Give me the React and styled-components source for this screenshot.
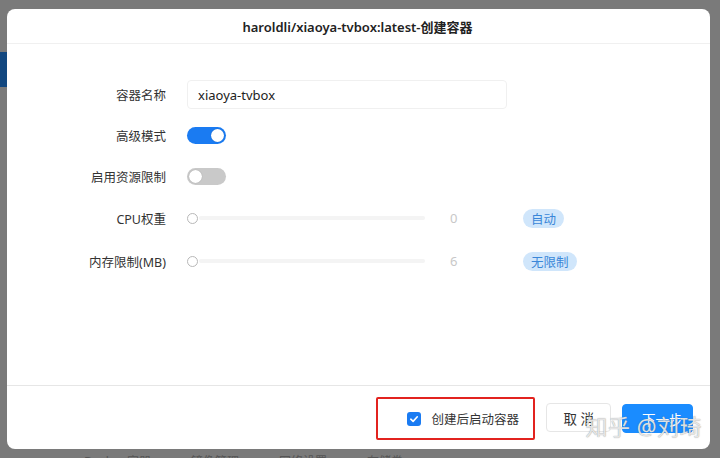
import React, { useState } from "react";
import styled, { createGlobalStyle } from "styled-components";

const GlobalStyle = createGlobalStyle`
    html, body {
        margin: 0;
        padding: 0;
        background: #7a7a7a;
    }
    body {
        font-family: "Noto Sans", "Noto Sans CJK SC", sans-serif;
        color: #333;
    }
`;

// 배경 페이지 (모달 뒤)
const Page = styled.div`
    position: relative;
    width: 720px;
    height: 458px;
    overflow: hidden;
    background: #7a7a7a;
    padding: 9px 0 0 7px;
    box-sizing: border-box;
`;

const SideTab = styled.div`
    position: absolute;
    left: 0;
    top: 52px;
    width: 7px;
    height: 35px;
    background: #12477f;
`;

const UnderText = styled.div`
    position: absolute;
    left: 84px;
    top: 452px;
    display: flex;
    gap: 40px;
    font-size: 12px;
    color: #555;
    white-space: nowrap;
`;

const Modal = styled.div`
    position: relative;
    width: 703px;
    height: 440px;
    background: #fff;
    border-radius: 8px;
    display: flex;
    flex-direction: column;
    overflow: hidden;
`;

const Header = styled.div`
    height: 35px;
    border-bottom: 1px solid #f0f0f0;
    display: flex;
    align-items: center;
    justify-content: center;
    padding-top: 1px;
    box-sizing: border-box;
`;

const Title = styled.div`
    font-size: 13px;
    font-weight: 600;
    color: #222;
    margin-left: -2px;
`;

const Body = styled.div`
    flex: 1;
    padding: 36px 0 0 14px;
    display: flex;
    flex-direction: column;
    gap: 11px;
    border-bottom: 1px solid #e6e6e6;
`;

const Row = styled.div`
    display: flex;
    align-items: center;
    height: ${(p) => p.$h || 30}px;
`;

const Label = styled.div`
    width: 145px;
    text-align: right;
    font-size: 12.5px;
    color: #333;
    margin-right: 21px;
    white-space: nowrap;
`;

const Input = styled.input`
    width: 320px;
    height: 29px;
    box-sizing: border-box;
    border: 1px solid #f0f0f0;
    border-radius: 4px;
    padding: 0 10px;
    font-family: inherit;
    font-size: 13px;
    color: #222;
    outline: none;
`;

const Switch = styled.div`
    width: 39px;
    height: 17px;
    border-radius: 9px;
    background: ${(p) => (p.$on ? "#1a7bf2" : "#c9c9c9")};
    display: flex;
    align-items: center;
    justify-content: ${(p) => (p.$on ? "flex-end" : "flex-start")};
    padding: 0 2px;
    box-sizing: border-box;
    cursor: pointer;
`;

const Knob = styled.div`
    width: 13px;
    height: 13px;
    border-radius: 50%;
    background: #fff;
    box-shadow: 0 0 1px rgba(0, 0, 0, 0.3);
`;

const Slider = styled.div`
    display: flex;
    align-items: center;
    width: 238px;
`;

const Thumb = styled.div`
    width: 9px;
    height: 9px;
    border-radius: 50%;
    border: 1.5px solid #b8b8b8;
    background: #fff;
    flex-shrink: 0;
`;

const Track = styled.div`
    flex: 1;
    height: 4px;
    margin-left: 1px;
    border-radius: 2px;
    background: #f4f4f4;
`;

const Value = styled.div`
    width: 98px;
    padding-left: 25px;
    box-sizing: border-box;
    font-size: 13px;
    color: #c8c8c8;
`;

const Badge = styled.div`
    height: 19px;
    padding: 0 8px;
    border-radius: 10px;
    background: #d0e6fb;
    color: #3a86d8;
    font-size: 12.5px;
    display: flex;
    align-items: center;
`;

const Footer = styled.div`
    height: 63px;
    display: flex;
    align-items: center;
    justify-content: flex-end;
    padding-right: 17px;
    gap: 11px;
`;

const Mark = styled.div`
    width: 159px;
    height: 43px;
    box-sizing: border-box;
    border: 2px solid #e2231f;
    border-radius: 2px;
    display: flex;
    align-items: center;
    padding-left: 29px;
    gap: 10px;
    margin-top: 2px;
`;

const Check = styled.div`
    width: 14px;
    height: 14px;
    border-radius: 3px;
    background: #1a7bf2;
    display: flex;
    align-items: center;
    justify-content: center;
`;

const CheckText = styled.span`
    font-size: 12.5px;
    color: #333;
`;

const Button = styled.button`
    height: 29px;
    padding: 0 ${(p) => (p.$primary ? 19 : 16)}px;
    border-radius: 4px;
    border: 1px solid ${(p) => (p.$primary ? "#1a8cff" : "#e6e6e6")};
    background: ${(p) => (p.$primary ? "#1a8cff" : "#fff")};
    color: ${(p) => (p.$primary ? "#fff" : "#333")};
    font-family: inherit;
    font-size: 13.5px;
    cursor: pointer;
    white-space: pre;
    ${(p) => p.$primary && "margin-top: 2px; width: 71px;"}
`;

const Watermark = styled.div`
    position: absolute;
    right: 8px;
    bottom: 8px;
    font-size: 22px;
    letter-spacing: 0.5px;
    color: rgba(240, 240, 240, 0.9);
    text-shadow: 0 0 1px rgba(90, 90, 90, 0.7);
    pointer-events: none;
    white-space: nowrap;
`;

export default function App() {
    const [advanced, setAdvanced] = useState(true);
    const [limit, setLimit] = useState(false);
    const [name, setName] = useState("xiaoya-tvbox");

    return (
        <>
            <GlobalStyle />
            <Page>
                <SideTab />
                <UnderText>
                    <span>Docker 容器</span>
                    <span>镜像管理</span>
                    <span>网络设置</span>
                    <span>存储卷</span>
                </UnderText>
                <Modal>
                    <Header>
                        <Title>haroldli/xiaoya-tvbox:latest-创建容器</Title>
                    </Header>
                    <Body>
                        <Row $h={29}>
                            <Label>容器名称</Label>
                            <Input value={name} onChange={(e) => setName(e.target.value)} />
                        </Row>
                        <Row>
                            <Label>高级模式</Label>
                            <Switch $on={advanced} onClick={() => setAdvanced(!advanced)}>
                                <Knob />
                            </Switch>
                        </Row>
                        <Row>
                            <Label>启用资源限制</Label>
                            <Switch $on={limit} onClick={() => setLimit(!limit)}>
                                <Knob />
                            </Switch>
                        </Row>
                        <Row $h={32}>
                            <Label>CPU权重</Label>
                            <Slider>
                                <Thumb />
                                <Track />
                            </Slider>
                            <Value>0</Value>
                            <Badge>自动</Badge>
                        </Row>
                        <Row $h={32}>
                            <Label>内存限制(MB)</Label>
                            <Slider>
                                <Thumb />
                                <Track />
                            </Slider>
                            <Value>6</Value>
                            <Badge>无限制</Badge>
                        </Row>
                    </Body>
                    <Footer>
                        <Mark>
                            <Check>
                                <svg width="10" height="10" viewBox="0 0 10 10">
                                    <path d="M1.8 5.2 L4.1 7.4 L8.3 2.8" fill="none" stroke="#fff" strokeWidth="1.6" strokeLinecap="round" strokeLinejoin="round" />
                                </svg>
                            </Check>
                            <CheckText>创建后启动容器</CheckText>
                        </Mark>
                        <Button>{"取 消"}</Button>
                        <Button $primary>{"下一步"}</Button>
                    </Footer>
                    <Watermark>知乎 @刘琦</Watermark>
                </Modal>
            </Page>
        </>
    );
}
